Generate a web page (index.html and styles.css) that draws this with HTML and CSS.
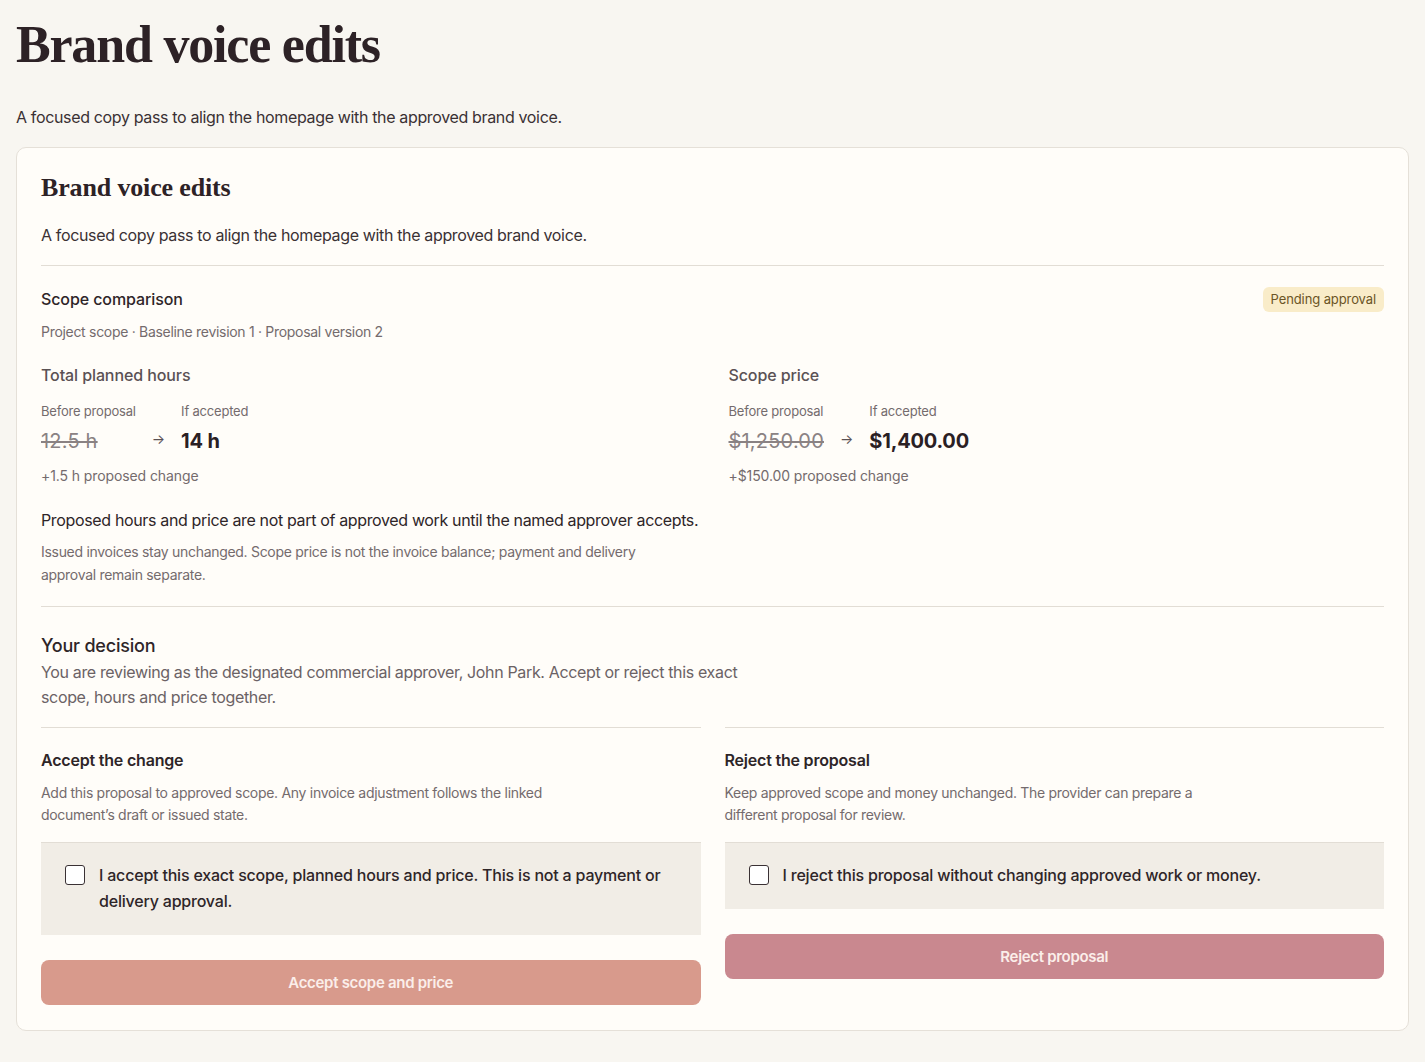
FILE: index.html
```html
<!DOCTYPE html>
<html lang="en">
<head>
<meta charset="utf-8">
<title>Brand voice edits</title>
<link rel="stylesheet" href="styles.css">
</head>
<body>
<main class="page">
  <h1 class="page-title">Brand voice edits</h1>
  <p class="page-lead">A focused copy pass to align the homepage with the approved brand voice.</p>

  <section class="card">
    <h2 class="card-title">Brand voice edits</h2>
    <p class="card-lead">A focused copy pass to align the homepage with the approved brand voice.</p>

    <div class="scope">
      <div class="scope-head">
        <div>
          <h3 class="scope-title">Scope comparison</h3>
          <p class="scope-meta">Project scope · Baseline revision 1 · Proposal version 2</p>
        </div>
        <span class="badge">Pending approval</span>
      </div>

      <div class="metrics">
        <div class="metric">
          <h4 class="metric-title">Total planned hours</h4>
          <div class="compare">
            <div class="compare-col">
              <span class="compare-label">Before proposal</span>
              <span class="value-old">12.5 h</span>
            </div>
            <span class="arrow">→</span>
            <div class="compare-col">
              <span class="compare-label">If accepted</span>
              <span class="value-new">14 h</span>
            </div>
          </div>
          <p class="delta">+1.5 h proposed change</p>
        </div>
        <div class="metric">
          <h4 class="metric-title">Scope price</h4>
          <div class="compare">
            <div class="compare-col">
              <span class="compare-label">Before proposal</span>
              <span class="value-old">$1,250.00</span>
            </div>
            <span class="arrow">→</span>
            <div class="compare-col">
              <span class="compare-label">If accepted</span>
              <span class="value-new">$1,400.00</span>
            </div>
          </div>
          <p class="delta">+$150.00 proposed change</p>
        </div>
      </div>

      <p class="notice">Proposed hours and price are not part of approved work until the named approver accepts.</p>
      <p class="notice-sub">Issued invoices stay unchanged. Scope price is not the invoice balance; payment and delivery approval remain separate.</p>
    </div>

    <div class="decision">
      <h3 class="decision-title">Your decision</h3>
      <p class="decision-lead">You are reviewing as the designated commercial approver, John Park. Accept or reject this exact scope, hours and price together.</p>

      <div class="options">
        <div class="option">
          <h4 class="option-title">Accept the change</h4>
          <p class="option-desc">Add this proposal to approved scope. Any invoice adjustment follows the linked document’s draft or issued state.</p>
          <label class="confirm">
            <input type="checkbox" class="check">
            <span>I accept this exact scope, planned hours and price. This is not a payment or delivery approval.</span>
          </label>
          <button class="btn btn-accept" type="button" disabled>Accept scope and price</button>
        </div>
        <div class="option">
          <h4 class="option-title">Reject the proposal</h4>
          <p class="option-desc">Keep approved scope and money unchanged. The provider can prepare a different proposal for review.</p>
          <label class="confirm">
            <input type="checkbox" class="check">
            <span>I reject this proposal without changing approved work or money.</span>
          </label>
          <button class="btn btn-reject" type="button" disabled>Reject proposal</button>
        </div>
      </div>
    </div>
  </section>
</main>
</body>
</html>
```

FILE: styles.css
```css
* { box-sizing: border-box; }

html, body {
  margin: 0;
  padding: 0;
}

body {
  background: #f8f6f1;
  color: #2e2528;
  font-family: Inter, "Noto Sans", sans-serif;
  -webkit-font-smoothing: antialiased;
}

h1, h2, h3, h4, p { margin: 0; }

.page {
  padding: 14px 16px 32px 16px;
}

.page-title {
  font-family: "Liberation Serif", "DejaVu Serif", serif;
  font-weight: 700;
  font-size: 52px;
  line-height: 62px;
  letter-spacing: -1.2px;
  color: #2d2226;
}

.page-lead {
  margin-top: 29px;
  font-size: 16px;
  line-height: 24px;
  color: #3a3134;
  letter-spacing: -0.35px;
}

.card {
  margin-top: 18px;
  background: #fffdf9;
  border: 1px solid #e5e0d8;
  border-radius: 10px;
  padding: 23px 24px 25px 24px;
}

.card-title {
  font-family: "Liberation Serif", "DejaVu Serif", serif;
  font-weight: 700;
  font-size: 26px;
  line-height: 34px;
  letter-spacing: -0.15px;
  color: #2d2226;
}

.card-lead {
  margin-top: 18px;
  font-size: 16px;
  line-height: 24px;
  color: #3a3134;
  letter-spacing: -0.35px;
  padding-bottom: 18px;
  border-bottom: 1px solid #e2ddd5;
}

.scope {
  padding-top: 21px;
  padding-bottom: 20px;
  border-bottom: 1px solid #e2ddd5;
}

.scope-head {
  display: flex;
  justify-content: space-between;
  align-items: flex-start;
}

.scope-title {
  font-size: 16px;
  line-height: 24px;
  font-weight: 500;
  color: #2e2528;
  letter-spacing: -0.1px;
}

.scope-meta {
  margin-top: 11px;
  font-size: 14px;
  line-height: 20px;
  color: #746b6d;
  letter-spacing: -0.3px;
}

.badge {
  margin-top: 0;
  background: #f9ecc9;
  color: #6b5526;
  font-size: 13px;
  line-height: 17px;
  padding: 4px 8px;
  border-radius: 6px;
  letter-spacing: -0.1px;
}

.metrics {
  margin-top: 22px;
  display: grid;
  grid-template-columns: 1fr 1fr;
  column-gap: 32px;
}

.metric-title {
  font-size: 16px;
  line-height: 22px;
  font-weight: 500;
  color: #5a5154;
  letter-spacing: -0.1px;
}

.compare {
  margin-top: 16px;
  display: flex;
  align-items: flex-end;
  gap: 16px;
}

.compare-col {
  display: flex;
  flex-direction: column;
  gap: 8px;
}

.compare-label {
  font-size: 13px;
  line-height: 18px;
  color: #746b6d;
  letter-spacing: -0.2px;
}

.value-old {
  font-size: 20px;
  line-height: 26px;
  color: #8a8283;
  text-decoration: line-through;
  letter-spacing: 0.2px;
}

.value-new {
  font-size: 20px;
  line-height: 26px;
  font-weight: 700;
  color: #2a2024;
  letter-spacing: -0.2px;
}

.arrow {
  font-size: 14px;
  line-height: 26px;
  color: #5a5154;
  padding-bottom: 2px;
}

.delta {
  margin-top: 12px;
  font-size: 14px;
  line-height: 20px;
  color: #746b6d;
  letter-spacing: -0.1px;
}

.notice {
  margin-top: 22px;
  font-size: 16px;
  line-height: 24px;
  color: #2e2528;
  letter-spacing: -0.35px;
}

.notice-sub {
  margin-top: 8px;
  max-width: 640px;
  font-size: 14px;
  line-height: 23px;
  color: #746b6d;
  letter-spacing: -0.3px;
}

.decision {
  padding-top: 27px;
}

.decision-title {
  font-size: 18px;
  line-height: 24px;
  font-weight: 500;
  color: #2e2528;
  letter-spacing: -0.2px;
}

.decision-lead {
  margin-top: 2px;
  max-width: 720px;
  font-size: 16px;
  line-height: 25px;
  color: #6b6265;
  letter-spacing: -0.35px;
}

.options {
  margin-top: 17px;
  display: grid;
  grid-template-columns: 1fr 1fr;
  column-gap: 24px;
  align-items: start;
}

.option {
  border-top: 1px solid #e2ddd5;
  padding-top: 21px;
  display: flex;
  flex-direction: column;
}

.option-title {
  font-size: 16px;
  line-height: 22px;
  font-weight: 600;
  color: #2e2528;
  letter-spacing: -0.2px;
}

.option-desc {
  margin-top: 11px;
  max-width: 510px;
  font-size: 14px;
  line-height: 22px;
  color: #746b6d;
  letter-spacing: -0.3px;
}

.confirm {
  margin-top: 16px;
  display: flex;
  align-items: flex-start;
  gap: 14px;
  background: #f1ede6;
  border-top: 1px solid #e2ddd5;
  padding: 19px 24px 21px 24px;
  font-size: 16px;
  font-weight: 500;
  line-height: 26px;
  color: #2e2528;
  letter-spacing: -0.2px;
}

.check {
  appearance: none;
  -webkit-appearance: none;
  margin: 3px 0 0 0;
  flex: none;
  width: 20px;
  height: 20px;
  background: #ffffff;
  border: 1px solid #3a3134;
  border-radius: 3px;
}

.btn {
  margin-top: 25px;
  width: 100%;
  height: 45px;
  border: none;
  border-radius: 8px;
  font-family: Inter, "Noto Sans", sans-serif;
  font-size: 15px;
  font-weight: 600;
  color: #fbeeea;
  letter-spacing: -0.3px;
}

.btn-accept { background: #d89a8c; }
.btn-reject { background: #c9888f; }
```
